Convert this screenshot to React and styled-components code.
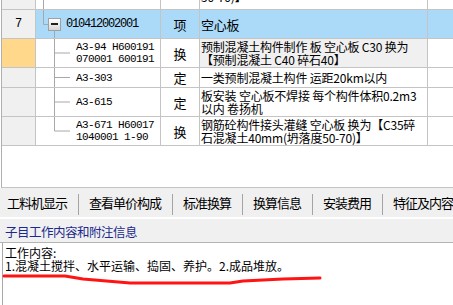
import React from "react";
import styled, { createGlobalStyle } from "styled-components";

const GlobalStyle = createGlobalStyle`
  html, body {
    margin: 0;
    padding: 0;
    background: #ffffff;
  }
  body {
    font-family: "Noto Sans CJK SC", "Liberation Sans", sans-serif;
    font-size: 12px;
    color: #000;
  }
`;

const LINE = "#c4c4c4";
const TREE = "#a8a8a8";

const Page = styled.div`
  width: 453px;
  height: 305px;
  overflow: hidden;
  display: flex;
  flex-direction: column;
  background: #fff;
`;

// ---------- grid ----------
const Grid = styled.div`
  height: 188px;
  box-sizing: border-box;
  margin-left: 1px;
  border-left: 1px solid #b0b0b0;
  border-bottom: 1px solid ${LINE};
  display: flex;
  flex-direction: column;
`;

const Row = styled.div`
  display: grid;
  grid-template-columns: 34px 125px 39px 228px 1fr;
  height: ${(p) => p.$h}px;
  background: ${(p) => (p.$active ? "#abdaf8" : "#fff")};
  flex-shrink: 0;
`;

const Cell = styled.div`
  box-sizing: border-box;
  border-right: 1px solid ${LINE};
  border-bottom: 1px solid ${LINE};
  overflow: hidden;
  display: flex;
  align-items: center;
  position: relative;
`;

const NumCell = styled(Cell)`
  justify-content: center;
  background: ${(p) => (p.$mark ? "#ffd88c" : "#f0f0f0")};
  font-family: "Liberation Mono", monospace;
  font-size: 12px;
`;

const TreeCell = styled(Cell)`
  padding-left: ${(p) => p.$indent}px;
  gap: 5px;
`;

const TypeCell = styled(Cell)`
  justify-content: center;
  font-size: 13px;
`;

const NameCell = styled(Cell)`
  padding: ${(p) => (p.$lines ? "1px 0 0 1px" : "0 0 0 1px")};
  align-items: ${(p) => (p.$lines ? "flex-start" : p.$bottom ? "flex-end" : "center")};
  padding-bottom: ${(p) => (p.$bottom ? "6px" : "0")};
  background: ${(p) => (p.$shade ? "#f0f0f0" : "transparent")};
  line-height: 13px;
  white-space: nowrap;
  font-size: ${(p) => (p.$big ? 13 : 12)}px;
  letter-spacing: -0.2px;
`;

const EndCell = styled(Cell)`
  border-right: none;
`;

const Code = styled.div`
  font-family: "Liberation Mono", monospace;
  font-size: ${(p) => (p.$big ? 12 : 11)}px;
  letter-spacing: ${(p) => (p.$big ? -1.2 : -0.6)}px;
  line-height: 12px;
  white-space: nowrap;
  position: relative;
  z-index: 1;
`;

const Expander = styled.span`
  width: 13px;
  height: 13px;
  box-sizing: border-box;
  border: 1px solid #a0a0a0;
  background: linear-gradient(#ffffff, #d6d6d6);
  display: flex;
  align-items: center;
  justify-content: center;
  position: relative;
  z-index: 1;
  &::after {
    content: "";
    width: 7px;
    height: 2px;
    background: #202020;
  }
`;

const Lines = styled.svg`
  position: absolute;
  left: 0;
  top: 0;
  width: 40px;
  height: 100%;
  pointer-events: none;
`;

const Filler = styled.div`
  flex: 1;
  background: #fff;
`;

// tree connectors: kind = 'pass' | 'parent' | 'child' | 'last'
const Connector = ({ kind }) => (
  <Lines>
    {kind === "pass" && <line x1="7.5" y1="0" x2="7.5" y2="100%" stroke={TREE} />}
    {kind === "parent" && (
      <>
        <line x1="7.5" y1="0" x2="7.5" y2="14.5" stroke={TREE} />
        <line x1="7.5" y1="14.5" x2="12" y2="14.5" stroke={TREE} />
        <line x1="18.5" y1="18" x2="18.5" y2="100%" stroke={TREE} />
      </>
    )}
    {(kind === "child" || kind === "last") && (
      <>
        <line x1="18.5" y1="0" x2="18.5" y2={kind === "last" ? "50%" : "100%"} stroke={TREE} />
        <line x1="18.5" y1="50%" x2="34" y2="50%" stroke={TREE} />
      </>
    )}
  </Lines>
);

const children = [
  { h: 29, code: ["A3-94 H600191", "070001 600191"], type: "换", name: ["预制混凝土构件制作 板 空心板 C30 换为", "【预制混凝土 C40 碎石40】"], mark: true, shade: true },
  { h: 20, code: ["A3-303"], type: "定", name: ["一类预制混凝土构件 运距20km以内"] },
  { h: 29, code: ["A3-615"], type: "定", name: ["板安装 空心板不焊接 每个构件体积0.2m3", "以内 卷扬机"] },
  { h: 29, code: ["A3-671 H60017", "1040001 1-90"], type: "换", name: ["钢筋砼构件接头灌缝 空心板 换为【C35碎", "石混凝土40mm(坍落度50-70)】"] },
];

// ---------- tabs ----------
const TabBar = styled.div`
  height: 29px;
  background: #f0f0f0;
  display: flex;
  align-items: flex-start;
  padding-top: 6px;
  box-sizing: border-box;
  flex-shrink: 0;
`;

const Tab = styled.div`
  padding: 0 11px 0 ${(p) => (p.$first ? 7 : 10)}px;
  font-size: 13px;
  letter-spacing: -1px;
  white-space: nowrap;
  border-right: ${(p) => (p.$last ? "none" : "1px solid #a4a4a4")};
  height: 21px;
  line-height: 17px;
`;

const Gap = styled.div`
  height: 2px;
  background: #fff;
  flex-shrink: 0;
`;

const PanelHead = styled.div`
  height: 21px;
  background: #f0f0f0;
  border-bottom: 1px solid #b4b4b4;
  color: #1b2a8e;
  font-size: 12.5px;
  letter-spacing: -0.5px;
  padding-left: 5px;
  display: flex;
  align-items: center;
  padding-top: 2px;
  box-sizing: content-box;
  flex-shrink: 0;
`;

const Content = styled.div`
  flex: 1;
  margin-left: 2px;
  border-left: 1px solid #a8a8a8;
  padding: 3px 0 0 2px;
  font-size: 12px;
  line-height: 13px;
  position: relative;
  white-space: nowrap;
`;

const Scribble = styled.svg`
  position: absolute;
  left: -3px;
  top: 0;
  width: 453px;
  height: 64px;
  pointer-events: none;
`;

const tabs = ["工料机显示", "查看单价构成", "标准换算", "换算信息", "安装费用", "特征及内容"];

export default function App() {
  return (
    <>
      <GlobalStyle />
      <Page>
        <Grid>
          <Row $h={10}>
            <NumCell />
            <TreeCell $indent={0}>
              <Connector kind="pass" />
            </TreeCell>
            <TypeCell />
            <NameCell $bottom>50-70)】</NameCell>
            <EndCell />
          </Row>
          <Row $h={29} $active>
            <NumCell>7</NumCell>
            <TreeCell $indent={12}>
              <Connector kind="parent" />
              <Expander />
              <Code $big>010412002001</Code>
            </TreeCell>
            <TypeCell>项</TypeCell>
            <NameCell $big>空心板</NameCell>
            <EndCell />
          </Row>
          {children.map((c, i) => (
            <Row key={i} $h={c.h}>
              <NumCell $mark={c.mark} />
              <TreeCell $indent={40}>
                <Connector kind={i === children.length - 1 ? "last" : "child"} />
                <Code>
                  {c.code.map((l, j) => (
                    <div key={j}>{l}</div>
                  ))}
                </Code>
              </TreeCell>
              <TypeCell>{c.type}</TypeCell>
              <NameCell $lines={c.name.length > 1} $shade={c.shade}>
                <div>
                  {c.name.map((l, j) => (
                    <div key={j}>{l}</div>
                  ))}
                </div>
              </NameCell>
              <EndCell />
            </Row>
          ))}
          <Filler />
        </Grid>
        <TabBar>
          {tabs.map((t, i) => (
            <Tab key={t} $first={i === 0} $last={i === tabs.length - 1}>
              {t}
            </Tab>
          ))}
        </TabBar>
        <Gap />
        <PanelHead>子目工作内容和附注信息</PanelHead>
        <Content>
          <div>工作内容:</div>
          <div>1.混凝土搅拌、水平运输、捣固、养护。2.成品堆放。</div>
          <Scribble viewBox="0 0 453 64">
            <polyline
              points="4,33 65,33 83,36 130,40 230,40 243,38 283,36 320,35"
              fill="none"
              stroke="#ff1414"
              strokeWidth="3"
              strokeLinejoin="round"
              strokeLinecap="round"
            />
          </Scribble>
        </Content>
      </Page>
    </>
  );
}
